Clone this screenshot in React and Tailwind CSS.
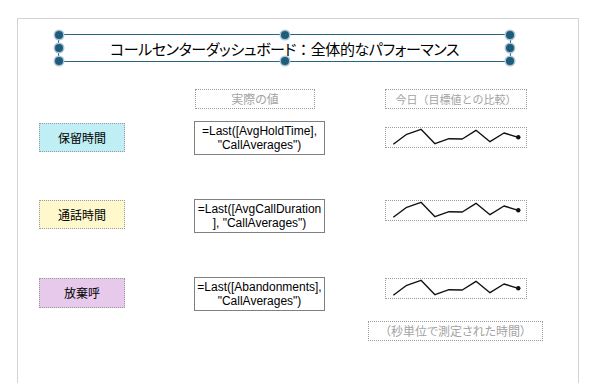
import React from 'react';

const jp = "font-['Meiryo','Noto_Sans_CJK_JP',sans-serif] [font-feature-settings:'palt']";
const jpPlain = "font-['Meiryo','Noto_Sans_CJK_JP',sans-serif]";

const rows = [
  {
    label: '保留時間',
    bg: 'bg-[#bfeef5]',
    formula: ['=Last([AvgHoldTime],', '"CallAverages")'],
    gap: 'mt-[12px]',
    labelTop: 'mt-[2px] h-[29px]',
    sparkTop: 'mt-[6px]',
  },
  {
    label: '通話時間',
    bg: 'bg-[#fff8cd]',
    formula: ['=Last([AvgCallDuration', '], "CallAverages")'],
    gap: 'mt-[44px]',
    labelTop: 'mt-[1px] h-[29px]',
    sparkTop: 'mt-[1px]',
  },
  {
    label: '放棄呼',
    bg: 'bg-[#e6c9eb]',
    formula: ['=Last([Abandonments],', '"CallAverages")'],
    gap: 'mt-[44px]',
    labelTop: 'mt-[1px] h-[30px]',
    sparkTop: 'mt-[1px]',
  },
];

const pts = [
  [7.3, 16.3], [20.7, 6.3], [35, 1.3], [49, 15.7], [63, 10.7],
  [76.3, 11], [90, 2.3], [104, 13.7], [118, 5], [132.3, 9.3],
];

function Sparkline() {
  const last = pts[pts.length - 1];
  return (
    <svg width="140" height="19" viewBox="0 0 140 19" className="block">
      <polyline
        points={pts.map((p) => p.join(',')).join(' ')}
        fill="none"
        stroke="#111"
        strokeWidth="1.4"
        strokeLinejoin="round"
      />
      <circle cx={last[0]} cy={last[1]} r="2.2" fill="#111" />
    </svg>
  );
}

function Handle({ className }) {
  return (
    <span
      className={`absolute w-[8px] h-[8px] -ml-[4px] -mt-[4px] rounded-full bg-[#1f5b7a] ring-[1.5px] ring-[#a9c5d5] ${className}`}
    />
  );
}

export default function App() {
  return (
    <div className="w-[595px] h-[383px] bg-white overflow-hidden">
      <div className="ml-[17px] mt-[18px] w-[562px] h-[380px] border-l border-t border-r border-[#d3d3d3] pt-[15px]">
        {/* Title with selection handles */}
        <div className="relative ml-[40px] w-[453px] h-[28px] border border-[#2a6484] flex items-center justify-center">
          <span className={`${jp} text-[15px] tracking-[-0.4px] text-black leading-none`}>
            コールセンターダッシュボード
            <span className="[font-feature-settings:normal]">：</span>
            全体的なパフォーマンス
          </span>
          <Handle className="left-0 top-0" />
          <Handle className="left-1/2 top-0" />
          <Handle className="left-full top-0" />
          <Handle className="left-0 top-1/2" />
          <Handle className="left-full top-1/2" />
          <Handle className="left-0 top-full" />
          <Handle className="left-1/2 top-full" />
          <Handle className="left-full top-full" />
        </div>

        <div className="pl-[21px]">
          {/* Headers */}
          <div className="flex mt-[27px]">
            <div className="w-[86px]" />
            <div className={`${jp} ml-[70px] w-[120px] h-[20px] border border-dotted border-[#9a9a9a] flex items-center justify-center text-[12px] text-[#a3a3a3]`}>
              実際の値
            </div>
            <div className={`${jpPlain} ml-[70px] w-[142px] h-[20px] border border-dotted border-[#9a9a9a] flex items-center justify-center text-[11px] text-[#a3a3a3]`}>
              今日（目標値との比較）
            </div>
          </div>

          {rows.map((r) => (
            <div key={r.label} className={`flex items-start ${r.gap}`}>
              <div
                className={`${jp} ${r.bg} ${r.labelTop} w-[86px] border border-dotted border-[#9a9a9a] flex items-center justify-center text-[12px] text-black`}
              >
                {r.label}
              </div>
              <div className="ml-[69px] w-[131px] h-[34px] border border-[#808080] flex flex-col items-center justify-center font-['Liberation_Sans',Arial,sans-serif] text-[12px] leading-[14px] text-black whitespace-nowrap overflow-hidden">
                {r.formula.map((l) => (
                  <span key={l}>{l}</span>
                ))}
              </div>
              <div className={`${r.sparkTop} ml-[60px] w-[142px] h-[21px] border border-dotted border-[#9a9a9a]`}>
                <Sparkline />
              </div>
            </div>
          ))}

          {/* Footnote */}
          <div className={`${jp} ml-[329px] mt-[10px] w-[175px] h-[20px] border border-dotted border-[#9a9a9a] flex items-center justify-center text-[12px] text-[#a3a3a3]`}>
            （秒単位で測定された時間）
          </div>
        </div>
      </div>
    </div>
  );
}
